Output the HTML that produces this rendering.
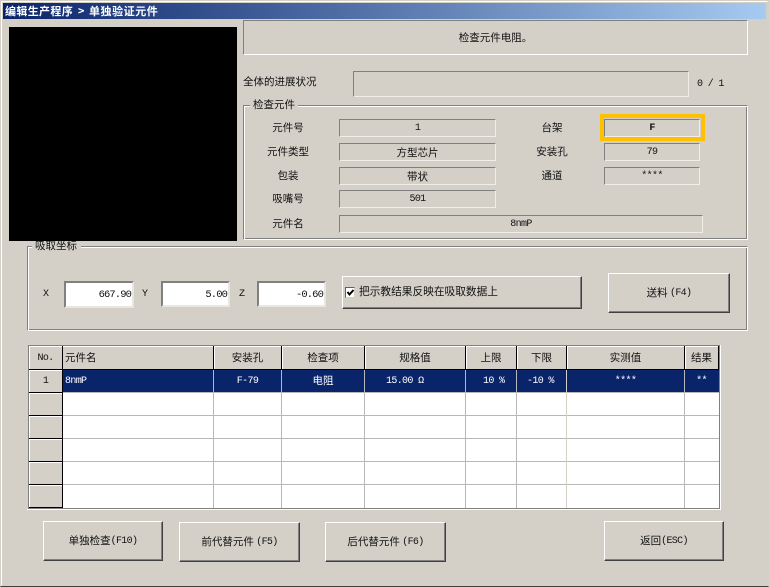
<!DOCTYPE html>
<html lang="zh">
<head>
<meta charset="utf-8">
<title>单独验证元件</title>
<style>
html,body{margin:0;padding:0;background:#d4d0c8;}
#w{position:relative;width:769px;height:587px;overflow:hidden;background:#d4d0c8;font-family:"WenQuanYi Zen Hei","Noto Sans CJK SC",sans-serif;font-size:10.5px;color:#111;-webkit-font-smoothing:none;font-smooth:never;}
#w div{position:absolute;box-sizing:border-box;}
.m{font-family:"Liberation Mono",monospace;font-size:10px;letter-spacing:-0.65px;}
.s{border:1px solid;border-color:#808080 #fff #fff #808080;}
.f{border:1px solid;border-color:#808080 #f0eee8 #f0eee8 #808080;display:flex;align-items:center;justify-content:center;white-space:nowrap;}
.f.m{padding-top:1px;}
.g{border:1px solid;border-color:#808080 #fff #fff #808080;box-shadow:inset 1px 1px 0 #fff,inset -1px -1px 0 #808080;}
.l{white-space:nowrap;line-height:14px;}
.c{text-align:center;white-space:nowrap;line-height:14px;}
.b{background:#d4d0c8;border-top:1px solid #fff;border-left:1px solid #fff;border-right:1px solid #404040;border-bottom:1px solid #404040;box-shadow:inset -1px -1px 0 #808080;display:flex;align-items:center;justify-content:center;white-space:nowrap;padding-bottom:2px;}
.b span{position:relative;top:1px;}
.i{background:#fff;border:2px solid;border-color:#808080 #e8e6e0 #e8e6e0 #808080;text-align:right;padding-right:1px;line-height:24px;font-family:"Liberation Mono",monospace;font-size:10.5px;letter-spacing:-0.9px;white-space:nowrap;}
.hl{background:#b8b8b8;}
.bk{background:#000;}
.wh{background:#fff;}
</style>
</head>
<body>
<div id="w">
  <div style="left:0;top:0;width:769px;height:587px;border:1px solid;border-color:#d4d0c8 #d4d0c8 #404040 #d4d0c8;"></div>
  <div style="left:1px;top:1px;width:767px;height:585px;border:1px solid;border-color:#fff #d4d0c8 #d4d0c8 #fff;"></div>

  <div style="left:3px;top:3px;width:763px;height:16px;background:linear-gradient(90deg,#0a246a,#a6caf0);"></div>
  <div class="l" style="left:5px;top:4px;color:#fff;font-weight:bold;font-size:11px;letter-spacing:0.35px;">编辑生产程序</div>
  <div class="l" style="left:78px;top:4px;color:#fff;font-weight:bold;font-size:11px;">&gt;</div>
  <div class="l" style="left:89px;top:4px;color:#fff;font-weight:bold;font-size:11px;letter-spacing:0.55px;">单独验证元件</div>

  <div style="left:9px;top:27px;width:228px;height:214px;background:#000;"></div>

  <div class="s f" style="left:243px;top:20px;width:505px;height:35px;border-color:#808080 #fff #fff #808080;">检查元件电阻。</div>

  <div class="l" style="left:243px;top:75px;">全体的进展状况</div>
  <div class="f" style="left:353px;top:71px;width:336px;height:26px;"></div>
  <div class="l m" style="left:697px;top:78px;">0 / 1</div>

  <!-- 检查元件 -->
  <div class="g" style="left:243px;top:105px;width:505px;height:135px;"></div>
  <div class="l" style="left:250px;top:98px;background:#d4d0c8;padding:0 3px;height:14px;">检查元件</div>

  <div class="c" style="left:243px;top:121px;width:90px;">元件号</div>
  <div class="f m" style="left:339px;top:119px;width:157px;height:18px;">1</div>
  <div class="c" style="left:243px;top:145px;width:90px;">元件类型</div>
  <div class="f" style="left:339px;top:143px;width:157px;height:18px;">方型芯片</div>
  <div class="c" style="left:243px;top:169px;width:90px;">包装</div>
  <div class="f" style="left:339px;top:167px;width:157px;height:18px;">带状</div>
  <div class="c" style="left:243px;top:192px;width:90px;">吸嘴号</div>
  <div class="f m" style="left:339px;top:190px;width:157px;height:18px;">501</div>
  <div class="c" style="left:243px;top:217px;width:90px;">元件名</div>
  <div class="f m" style="left:339px;top:215px;width:364px;height:18px;">8nmP</div>

  <div class="c" style="left:520px;top:121px;width:64px;">台架</div>
  <div style="left:600px;top:114px;width:105px;height:27px;border:4px solid #ffc000;"></div>
  <div class="f m" style="left:604px;top:119px;width:96px;height:18px;font-weight:bold;">F</div>
  <div class="c" style="left:520px;top:145px;width:64px;">安装孔</div>
  <div class="f m" style="left:604px;top:143px;width:96px;height:18px;">79</div>
  <div class="c" style="left:520px;top:169px;width:64px;">通道</div>
  <div class="f m" style="left:604px;top:167px;width:96px;height:18px;">****</div>

  <!-- 吸取坐标 -->
  <div class="g" style="left:27px;top:246px;width:721px;height:85px;"></div>
  <div style="left:32px;top:241px;width:49px;height:10px;background:#d4d0c8;"></div>
  <div class="l" style="left:35px;top:239px;">吸取坐标</div>
  <div style="left:32px;top:236px;width:49px;height:5px;background:#000;"></div>

  <div class="l m" style="left:43px;top:288px;">X</div>
  <div class="i" style="left:64px;top:281px;width:70px;height:27px;">667.90</div>
  <div class="l m" style="left:142px;top:288px;">Y</div>
  <div class="i" style="left:161px;top:281px;width:69px;height:26px;">5.00</div>
  <div class="l m" style="left:239px;top:288px;">Z</div>
  <div class="i" style="left:257px;top:281px;width:69px;height:26px;">-0.60</div>

  <div class="b" style="left:342px;top:276px;width:240px;height:33px;"></div>
  <div style="left:345px;top:287px;width:10px;height:11px;background:#fff;border:1px solid;border-color:#606060 #d4d0c8 #d4d0c8 #606060;"></div>
  <svg style="position:absolute;left:345px;top:287px;" width="11" height="11" viewBox="0 0 11 11"><path d="M2.5 5 L4.5 7.5 L8.5 3" fill="none" stroke="#000" stroke-width="2"/></svg>
  <div class="l" style="left:359px;top:285px;font-size:10.7px;">把示教结果反映在吸取数据上</div>

  <div class="b" style="left:608px;top:273px;width:122px;height:40px;">送料&nbsp;<span class="m">(F4)</span></div>

  <!-- table -->
  <div style="left:28px;top:345px;width:692px;height:164px;background:#fff;border:1px solid #808080;"></div>
  <div style="left:27px;top:509px;width:694px;height:1px;background:#fff;"></div>
  <div style="left:720px;top:345px;width:1px;height:165px;background:#fff;"></div>

  <div style="left:29px;top:346px;width:690px;height:24px;background:#d4d0c8;"></div>
  <div style="left:29px;top:370px;width:33px;height:138px;background:#d4d0c8;"></div>
  <div style="left:63px;top:370px;width:656px;height:23px;background:#0a246a;"></div>

  <!-- highlights -->
  <div class="wh" style="left:29px;top:346px;width:690px;height:1px;"></div>
  <div class="wh" style="left:29px;top:346px;width:1px;height:162px;"></div>
  <div class="wh" style="left:214px;top:346px;width:1px;height:23px;"></div>
  <div class="wh" style="left:282px;top:346px;width:1px;height:23px;"></div>
  <div class="wh" style="left:365px;top:346px;width:1px;height:23px;"></div>
  <div class="wh" style="left:466px;top:346px;width:1px;height:23px;"></div>
  <div class="wh" style="left:517px;top:346px;width:1px;height:23px;"></div>
  <div class="wh" style="left:567px;top:346px;width:1px;height:23px;"></div>
  <div class="wh" style="left:685px;top:346px;width:1px;height:23px;"></div>
  <div class="wh" style="left:29px;top:393px;width:33px;height:1px;"></div>
  <div class="wh" style="left:29px;top:416px;width:33px;height:1px;"></div>
  <div class="wh" style="left:29px;top:439px;width:33px;height:1px;"></div>
  <div class="wh" style="left:29px;top:462px;width:33px;height:1px;"></div>
  <div class="wh" style="left:29px;top:485px;width:33px;height:1px;"></div>
  <div class="wh" style="left:29px;top:370px;width:33px;height:1px;"></div>

  <!-- horizontal rules -->
  <div class="bk" style="left:29px;top:369px;width:690px;height:1px;"></div>
  <div class="bk" style="left:29px;top:392px;width:34px;height:1px;"></div>
  <div class="bk" style="left:29px;top:415px;width:34px;height:1px;"></div>
  <div class="bk" style="left:29px;top:438px;width:34px;height:1px;"></div>
  <div class="bk" style="left:29px;top:461px;width:34px;height:1px;"></div>
  <div class="bk" style="left:29px;top:484px;width:34px;height:1px;"></div>
  <div class="bk" style="left:29px;top:507px;width:34px;height:1px;"></div>
  <div class="hl" style="left:63px;top:392px;width:656px;height:1px;"></div>
  <div class="hl" style="left:63px;top:415px;width:656px;height:1px;"></div>
  <div class="hl" style="left:63px;top:438px;width:656px;height:1px;"></div>
  <div class="hl" style="left:63px;top:461px;width:656px;height:1px;"></div>
  <div class="hl" style="left:63px;top:484px;width:656px;height:1px;"></div>

  <!-- vertical rules -->
  <div class="bk" style="left:62px;top:346px;width:1px;height:162px;"></div>
  <div class="hl" style="left:213px;top:370px;width:1px;height:138px;"></div>
  <div class="hl" style="left:281px;top:370px;width:1px;height:138px;"></div>
  <div class="hl" style="left:364px;top:370px;width:1px;height:138px;"></div>
  <div class="hl" style="left:465px;top:370px;width:1px;height:138px;"></div>
  <div class="hl" style="left:516px;top:370px;width:1px;height:138px;"></div>
  <div class="hl" style="left:566px;top:370px;width:1px;height:138px;background:#d4d0c8;"></div>
  <div class="hl" style="left:684px;top:370px;width:1px;height:138px;"></div>
  <div class="bk" style="left:213px;top:346px;width:1px;height:24px;"></div>
  <div class="bk" style="left:281px;top:346px;width:1px;height:24px;"></div>
  <div class="bk" style="left:364px;top:346px;width:1px;height:24px;"></div>
  <div class="bk" style="left:465px;top:346px;width:1px;height:24px;"></div>
  <div class="bk" style="left:516px;top:346px;width:1px;height:24px;"></div>
  <div class="bk" style="left:566px;top:346px;width:1px;height:24px;"></div>
  <div class="bk" style="left:684px;top:346px;width:1px;height:24px;"></div>
  <div class="bk" style="left:718px;top:346px;width:1px;height:24px;"></div>

  <!-- header -->
  <div class="c m" style="left:29px;top:352px;width:33px;">No.</div>
  <div class="l" style="left:65px;top:351px;">元件名</div>
  <div class="c" style="left:214px;top:351px;width:67px;">安装孔</div>
  <div class="c" style="left:282px;top:351px;width:82px;">检查项</div>
  <div class="c" style="left:365px;top:351px;width:100px;">规格值</div>
  <div class="c" style="left:466px;top:351px;width:50px;">上限</div>
  <div class="c" style="left:517px;top:351px;width:49px;">下限</div>
  <div class="c" style="left:567px;top:351px;width:117px;">实测值</div>
  <div class="c" style="left:685px;top:351px;width:33px;">结果</div>

  <!-- row 1 -->
  <div class="c m" style="left:29px;top:375px;width:33px;">1</div>
  <div class="l m" style="left:65px;top:375px;color:#fff;">8nmP</div>
  <div class="c m" style="left:214px;top:375px;width:67px;color:#fff;">F-79</div>
  <div class="c" style="left:282px;top:374px;width:82px;color:#fff;">电阻</div>
  <div class="l m" style="left:386px;top:375px;color:#fff;">15.00 Ω</div>
  <div class="l m" style="left:483px;top:375px;color:#fff;">10 %</div>
  <div class="l m" style="left:527px;top:375px;color:#fff;">-10 %</div>
  <div class="c m" style="left:567px;top:375px;width:117px;color:#fff;">****</div>
  <div class="c m" style="left:685px;top:375px;width:33px;color:#fff;">**</div>

  <!-- bottom buttons -->
  <div class="b" style="left:43px;top:521px;width:120px;height:40px;">单独检查<span class="m">(F10)</span></div>
  <div class="b" style="left:179px;top:522px;width:121px;height:40px;">前代替元件&nbsp;<span class="m">(F5)</span></div>
  <div class="b" style="left:325px;top:522px;width:121px;height:40px;">后代替元件&nbsp;<span class="m">(F6)</span></div>
  <div class="b" style="left:604px;top:521px;width:120px;height:40px;">返回<span class="m">(ESC)</span></div>
</div>
</body>
</html>
